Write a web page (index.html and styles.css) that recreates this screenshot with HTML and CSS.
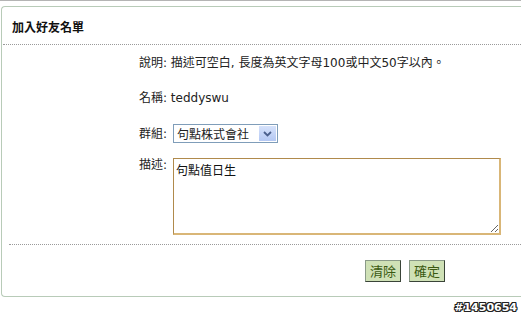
FILE: index.html
```html
<!DOCTYPE html>
<html lang="zh-Hant">
<head>
<meta charset="utf-8">
<title>加入好友名單</title>
<link rel="stylesheet" href="styles.css">
</head>
<body>
<div class="topline"></div>
<div class="panel">
  <div class="panel-head"><h2 class="title">加入好友名單</h2></div>
  <div class="form">
    <div class="row note">說明: 描述可空白, 長度為英文字母100或中文50字以內。</div>
    <div class="row name">名稱: teddyswu</div>
    <div class="row group">
      <span class="label">群組:</span>
      <span class="select">
        <span class="select-text">句點株式會社</span>
        <span class="select-btn">
          <svg width="9" height="6" viewBox="0 0 9 6"><path d="M1 1 L4.5 4.5 L8 1" fill="none" stroke="#4a5f8c" stroke-width="1.8"/></svg>
        </span>
      </span>
    </div>
    <div class="row desc">
      <span class="label">描述:</span>
      <textarea class="textarea">句點值日生</textarea>
    </div>
  </div>
  <div class="panel-foot">
    <button class="btn" type="button">清除</button>
    <button class="btn" type="button">確定</button>
  </div>
</div>
<div class="watermark">#1450654</div>
</body>
</html>
```
FILE: styles.css
```css
html, body {
  margin: 0;
  padding: 0;
  background: #fff;
}
body {
  font-family: "DejaVu Sans", "Noto Sans CJK TC", sans-serif;
  font-size: 12px;
  color: #222;
  width: 521px;
  height: 317px;
  overflow: hidden;
}
.topline {
  height: 1px;
  background: #b4b4b4;
}
.panel {
  margin: 5px 0 0 1px;
  height: 289px;
  border: 1px solid #b8cbb8;
  border-right: none;
  border-radius: 4px 0 0 4px;
  display: flex;
  flex-direction: column;
}
.panel-head {
  margin-left: 1px;
  padding: 12px 0 9px 9px;
  border-bottom: 1px dotted #9a9a9a;
}
.title {
  margin: 0;
  font-family: "Noto Sans CJK TC", sans-serif;
  font-size: 12px;
  line-height: 16px;
  font-weight: bold;
  color: #111;
}
.form {
  padding-left: 137px;
  display: flex;
  flex-direction: column;
}
.row {
  display: flex;
  align-items: center;
  line-height: 16px;
}
.note { margin-top: 10px; }
.name { margin-top: 19px; }
.group { margin-top: 18px; }
.desc { margin-top: 14px; align-items: flex-start; }
.label {
  width: 34px;
  flex: none;
}
.select {
  display: flex;
  align-items: center;
  width: 100px;
  height: 17px;
  border: 1px solid #7f9db9;
  background: #fff;
  padding-left: 3px;
  box-sizing: content-box;
}
.select-text {
  flex: 1;
  font-family: "Noto Sans CJK TC", sans-serif;
  font-size: 12px;
  line-height: 15px;
  white-space: nowrap;
  overflow: hidden;
}
.select-btn {
  flex: none;
  width: 17px;
  height: 15px;
  margin-right: 1px;
  background: linear-gradient(#d6e2fb, #b4c8f3);
  display: flex;
  align-items: center;
  justify-content: center;
}
.textarea {
  width: 328px;
  height: 77px;
  box-sizing: border-box;
  border-style: solid;
  border-width: 1px 2px 2px 1px;
  border-color: #b08a4c #d9b677 #d9b677 #b08a4c;
  padding: 3px 2px;
  margin: 1px 0 0 0;
  font-family: "Noto Sans CJK TC", sans-serif;
  font-size: 12px;
  line-height: 16px;
  color: #111;
  resize: both;
  outline: none;
}
.panel-foot {
  margin: 9px 0 0 7px;
  border-top: 1px dotted #9a9a9a;
  padding: 15px 76px 0 0;
  display: flex;
  justify-content: flex-end;
  gap: 8px;
}
.btn {
  height: 22px;
  padding: 0 4px;
  min-width: 36px;
  border: 1px solid #44524a;
  border-color: #8a9a88 #3a4438 #3a4438 #8a9a88;
  background: #cfe1b6;
  color: #3b5a12;
  font-family: "Noto Sans CJK TC", sans-serif;
  font-size: 13px;
  line-height: 18px;
  cursor: pointer;
}
.watermark {
  text-align: right;
  padding-right: 4px;
  margin-top: 4px;
  font-family: "DejaVu Sans", sans-serif;
  font-weight: bold;
  font-size: 11px;
  line-height: 13px;
  color: #fff;
  text-shadow: 1px 0 0 #222, -1px 0 0 #222, 0 1px 0 #222, 0 -1px 0 #222, 1px 1px 0 #222, -1px -1px 0 #222, 1px -1px 0 #222, -1px 1px 0 #222;
}
```
